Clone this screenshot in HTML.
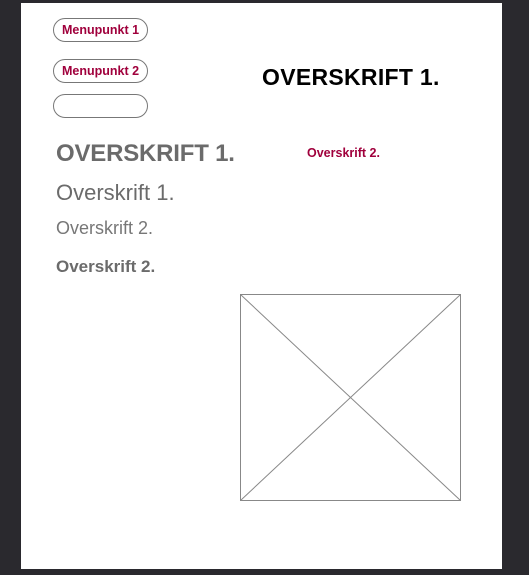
<!DOCTYPE html>
<html><head><meta charset="utf-8"><style>
html,body{margin:0;padding:0;width:529px;height:575px;background:#2a292e;overflow:hidden;font-family:"Liberation Sans",sans-serif}
.page{position:absolute;left:21px;top:3px;width:481px;height:566px;background:#fff}
.pill{position:absolute;left:53px;width:95px;height:24px;border:1px solid #777;border-radius:12px;box-sizing:border-box;color:#a0003c;font-weight:bold;font-size:12.5px;line-height:22px;text-align:center}
.t{position:absolute;white-space:nowrap}
</style></head><body>
<div class="page"></div>
<div class="pill" style="top:18px">Menupunkt 1</div>
<div class="pill" style="top:59px">Menupunkt 2</div>
<div class="pill" style="top:94px"></div>
<div class="t" style="left:262px;top:64px;font-size:23px;font-weight:bold;color:#000;letter-spacing:0.3px">OVERSKRIFT 1.</div>
<div class="t" style="left:307px;top:146px;font-size:12.5px;font-weight:bold;color:#a0003c">Overskrift 2.</div>
<div class="t" style="left:56px;top:140px;font-size:24px;font-weight:bold;color:#6b6b6b;letter-spacing:-0.2px">OVERSKRIFT 1.</div>
<div class="t" style="left:56px;top:180px;font-size:22px;color:#6b6b6b;letter-spacing:0px">Overskrift 1.</div>
<div class="t" style="left:56px;top:218px;font-size:18px;color:#777">Overskrift 2.</div>
<div class="t" style="left:56px;top:257px;font-size:17px;font-weight:bold;color:#6b6b6b">Overskrift 2.</div>
<svg style="position:absolute;left:240px;top:294px" width="221" height="207">
<rect x="0.5" y="0.5" width="220" height="206" fill="none" stroke="#888" stroke-width="1"/>
<line x1="0.5" y1="0.5" x2="220.5" y2="206.5" stroke="#888"/>
<line x1="220.5" y1="0.5" x2="0.5" y2="206.5" stroke="#888"/>
</svg>
</body></html>
